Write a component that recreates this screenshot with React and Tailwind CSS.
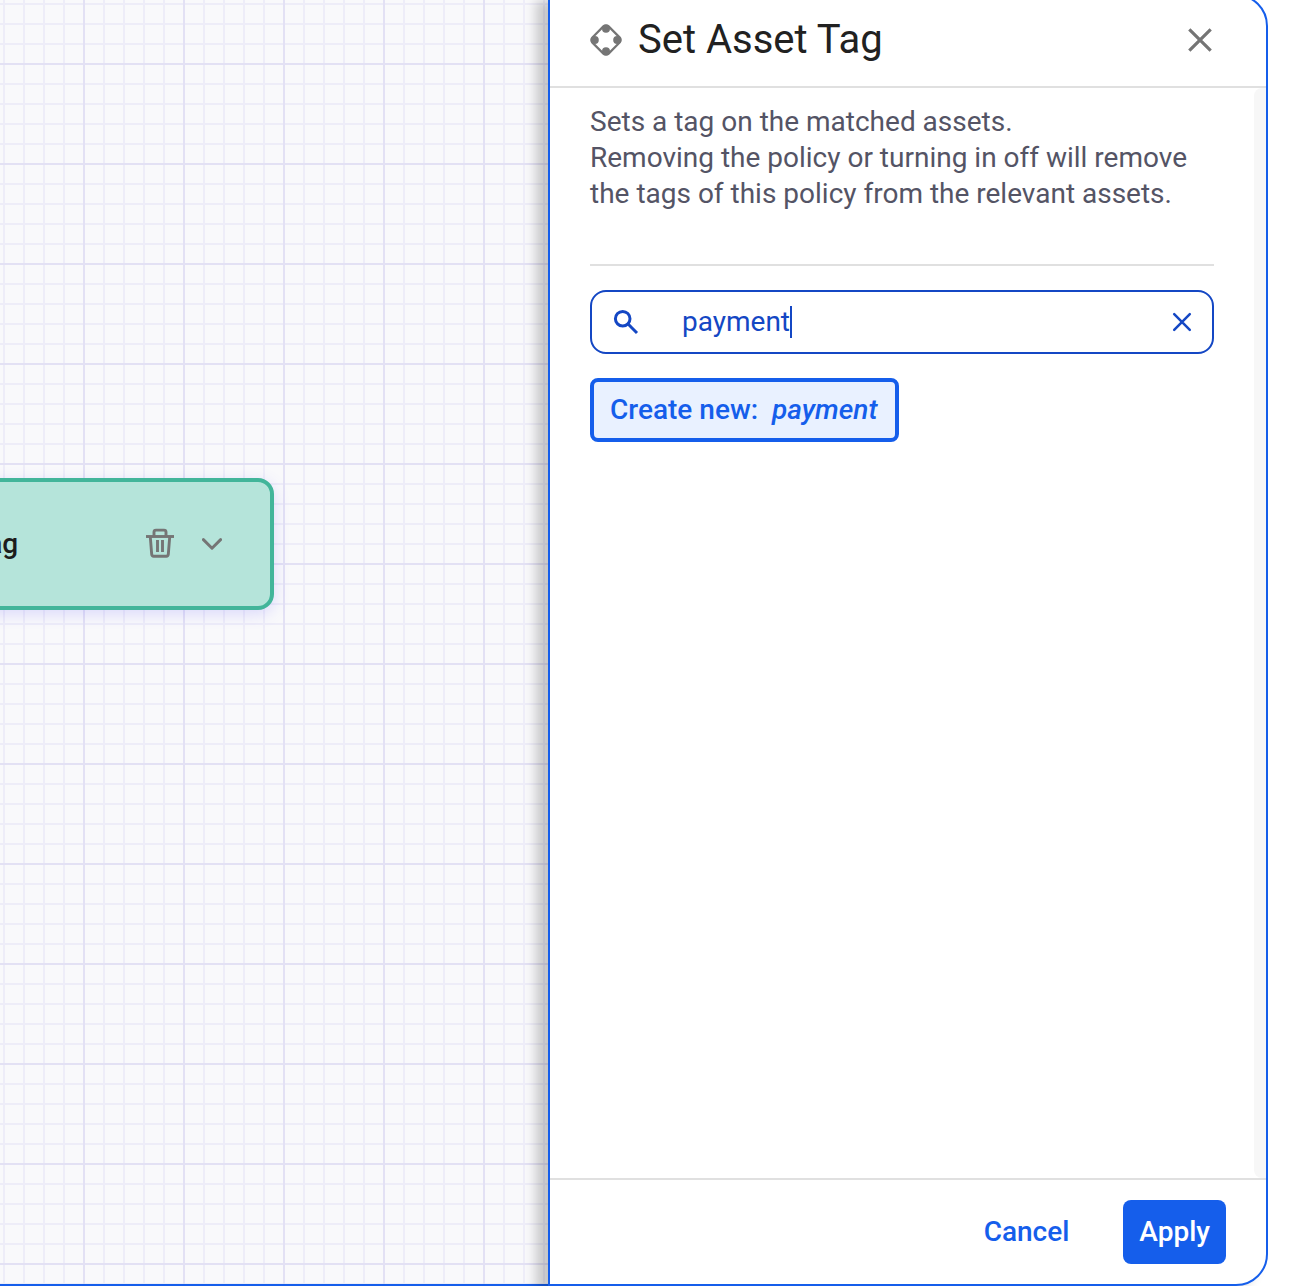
import { useState } from "react";

function AssetIcon() {
  return (
    <svg viewBox="0 0 32 32" className="size-8 shrink-0 text-[#757575]" aria-hidden="true">
      <path
        d="M13.4 2.4a3.7 3.7 0 0 1 5.2 0L29.6 13.4a3.7 3.7 0 0 1 0 5.2L18.6 29.6a3.7 3.7 0 0 1-5.2 0L2.4 18.6a3.7 3.7 0 0 1 0-5.2Z"
        fill="none"
        stroke="currentColor"
        strokeWidth="2.2"
      />
      <g fill="currentColor">
        <circle cx="16" cy="4.8" r="4" />
        <circle cx="16" cy="27.2" r="4" />
        <circle cx="4.8" cy="16" r="4" />
        <circle cx="27.2" cy="16" r="4" />
      </g>
    </svg>
  );
}

function SearchIcon() {
  return (
    <svg viewBox="0 0 32 32" className="size-8" fill="none" stroke="currentColor" strokeWidth="3" aria-hidden="true">
      <circle cx="12.7" cy="12.7" r="7.3" />
      <path d="M17.8 17.8 27 27" />
    </svg>
  );
}

function CloseIcon() {
  return (
    <svg viewBox="0 0 24 24" className="size-6" fill="none" stroke="currentColor" strokeWidth="3.2" aria-hidden="true">
      <path d="M1.3 1.3 22.7 22.7M22.7 1.3 1.3 22.7" />
    </svg>
  );
}

function ClearIcon() {
  return (
    <svg viewBox="0 0 20 20" className="size-5" fill="none" stroke="currentColor" strokeWidth="2.5" strokeLinecap="round" aria-hidden="true">
      <path d="M2.2 2.2 17.8 17.8M17.8 2.2 2.2 17.8" />
    </svg>
  );
}

function TrashIcon() {
  return (
    <svg viewBox="0 0 28 32" className="h-8 w-7" fill="none" stroke="currentColor" strokeWidth="2.9" aria-hidden="true">
      <path d="M0 8.5h28" />
      <path d="M8 8.5V4.1a2 2 0 0 1 2-2h8a2 2 0 0 1 2 2v4.4" />
      <path d="M4.3 9 5.7 26.4a2 2 0 0 0 2 1.8h12.6a2 2 0 0 0 2-1.8L23.7 9" />
      <path d="M11.5 12V24M16.5 12V24" />
    </svg>
  );
}

function ChevronIcon() {
  return (
    <svg viewBox="0 0 20 12" className="h-3 w-5" fill="none" stroke="currentColor" strokeWidth="2.9" strokeLinecap="round" strokeLinejoin="round" aria-hidden="true">
      <path d="M1.4 1.6 10 10.2 18.6 1.6" />
    </svg>
  );
}

function PolicyCanvas() {
  return (
    <main className="relative min-w-0 flex-1 overflow-hidden border-b-2 border-[#155eeb] bg-[#f9f9fb] bg-[linear-gradient(#e3e1f4_2px,transparent_2px),linear-gradient(90deg,#e3e1f4_2px,transparent_2px),linear-gradient(#eeedf8_2px,transparent_2px),linear-gradient(90deg,#eeedf8_2px,transparent_2px)] bg-[size:100px_100px,100px_100px,20px_20px,20px_20px] bg-[position:83px_63px,83px_63px,3px_3px,3px_3px]">
      <div className="absolute -left-20 top-[478px] flex h-[132px] w-[354px] items-center rounded-2xl border-4 border-[#42b59a] bg-[#b5e4da] px-12 text-[#757575] shadow-[0_4px_16px_rgba(99,91,255,0.2)]">
        <span className="mr-auto text-[28px] leading-9 font-medium text-[#1c1c1c]">Tag</span>
        <button type="button" aria-label="Delete step">
          <TrashIcon />
        </button>
        <button type="button" aria-label="Expand step" className="ml-7">
          <ChevronIcon />
        </button>
      </div>
    </main>
  );
}

export default function App() {
  const [query, setQuery] = useState("payment");

  return (
    <div className="h-screen overflow-hidden bg-white pr-[34px] pb-0.5 font-['Roboto',sans-serif]">
      <div className="flex h-full overflow-hidden">
        <PolicyCanvas />
        <aside className="relative -mt-1.5 flex w-[720px] shrink-0 flex-col overflow-hidden rounded-r-[32px] border-2 border-[#155eeb] bg-white shadow-[-12px_6px_12px_rgba(0,0,0,0.2)]">
          <header className="flex h-[92px] shrink-0 items-center gap-4 border-b-2 border-[#e0e0e0] pr-[54px] pb-0.5 pl-10">
            <AssetIcon />
            <h1 className="flex-1 text-[40px] leading-12 text-[#212121]">Set Asset Tag</h1>
            <button type="button" aria-label="Close" className="text-[#757575]">
              <CloseIcon />
            </button>
          </header>

          <div className="flex min-h-0 flex-1">
            <div className="min-w-0 flex-1 px-10 pt-4">
              <p className="text-[28px] leading-9 text-[#545465]">
                Sets a tag on the matched assets.
                <br />
                Removing the policy or turning in off will remove
                <br />
                the tags of this policy from the relevant assets.
              </p>
              <hr className="mt-13 mb-6 border-t-2 border-[#e0e0e0]" />
              <div className="flex h-16 items-center rounded-2xl border-2 border-[#1447c4] pr-5 pl-[18px] text-[#1447c4]">
                <label htmlFor="tag-search" aria-label="Search tags" className="mr-10">
                  <SearchIcon />
                </label>
                <input
                  id="tag-search"
                  type="text"
                  value={query}
                  onChange={(e) => setQuery(e.target.value)}
                  className="field-sizing-content text-[28px] leading-9 outline-none"
                />
                <span className="mr-auto h-8 w-0.5 bg-[#1447c4]" />
                <button type="button" aria-label="Clear search" onClick={() => setQuery("")}>
                  <ClearIcon />
                </button>
              </div>
              <button
                type="button"
                className="mt-6 flex h-16 items-center gap-3.5 rounded-lg border-4 border-[#155eeb] bg-[#e9f1ff] pr-[18px] pl-4 text-[28px] leading-9 font-medium text-[#155eeb]"
              >
                <span>Create new:</span>
                <em>{query}</em>
              </button>
            </div>
            <div className="w-3 rounded-l-lg bg-[#f7f7f7]" />
          </div>

          <footer className="flex shrink-0 justify-end gap-[38px] border-t-2 border-[#e0e0e0] px-10 py-5 text-[28px] leading-9 font-medium">
            <button type="button" className="h-16 rounded-lg px-4 text-[#155eeb]">
              Cancel
            </button>
            <button type="button" className="h-16 rounded-lg bg-[#155eeb] px-4 text-white">
              Apply
            </button>
          </footer>
        </aside>
      </div>
    </div>
  );
}
